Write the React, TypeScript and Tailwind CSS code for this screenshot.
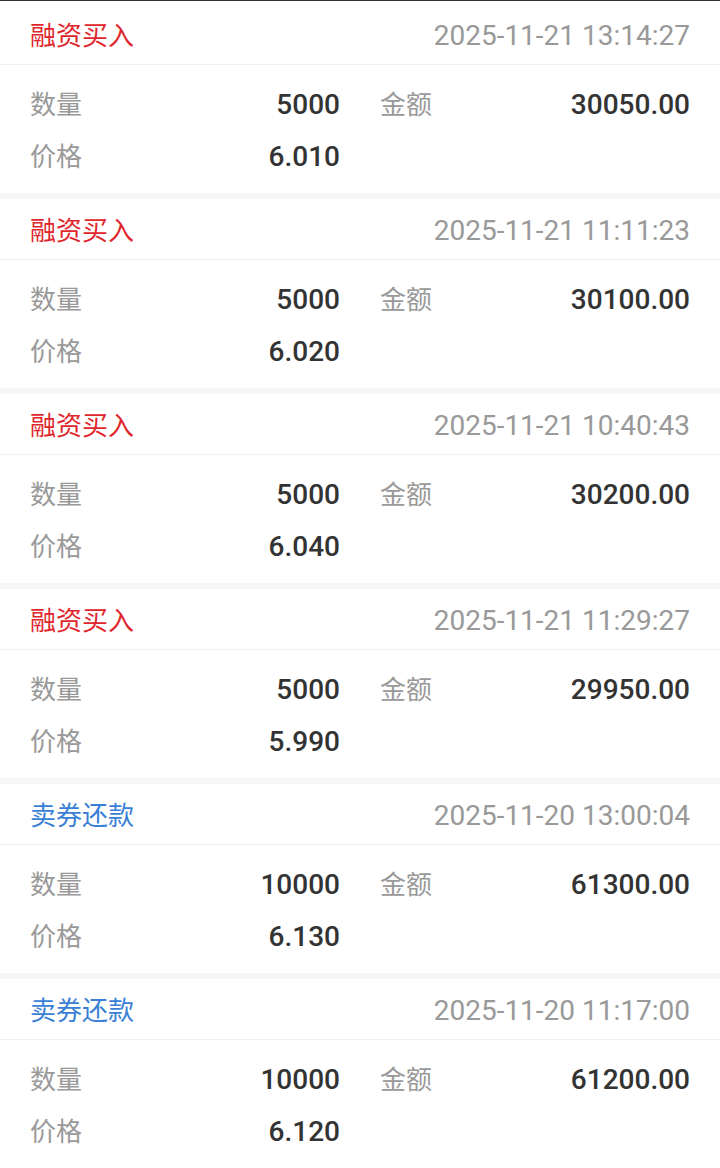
import React from "react";

type Rec = { type: string; time: string; qty: string; amount: string; price: string };

const data: Rec[] = [
  { type: "融资买入", time: "2025-11-21 13:14:27", qty: "5000", amount: "30050.00", price: "6.010" },
  { type: "融资买入", time: "2025-11-21 11:11:23", qty: "5000", amount: "30100.00", price: "6.020" },
  { type: "融资买入", time: "2025-11-21 10:40:43", qty: "5000", amount: "30200.00", price: "6.040" },
  { type: "融资买入", time: "2025-11-21 11:29:27", qty: "5000", amount: "29950.00", price: "5.990" },
  { type: "卖券还款", time: "2025-11-20 13:00:04", qty: "10000", amount: "61300.00", price: "6.130" },
  { type: "卖券还款", time: "2025-11-20 11:17:00", qty: "10000", amount: "61200.00", price: "6.120" },
];

const font = { fontFamily: 'Roboto, "Noto Sans CJK SC", sans-serif' };

function Cell({ label, value }: { label: string; value?: string }) {
  return (
    <div className="flex h-[52px] items-center justify-between">
      <span className="text-[26px] text-[#999999]">{label}</span>
      {value !== undefined && <span className="text-[28px] font-medium text-[#333333]">{value}</span>}
    </div>
  );
}

export default function App() {
  return (
    <div className="min-h-[1168px] w-[720px] border-t border-[#333333] bg-white" style={font}>
      {data.map((r, i) => (
        <div key={i} className={i === 0 ? "bg-white pt-[3px]" : "bg-white"}>
          <div className="flex h-[61px] items-center justify-between border-b border-[#f0f0f0] px-[30px] pt-[4px]">
            <span className={`text-[26px] ${r.type === "融资买入" ? "text-[#e0262c]" : "text-[#3a7fd6]"}`}>{r.type}</span>
            <span className="text-[28px] text-[#999999]">{r.time}</span>
          </div>
          <div className="grid grid-cols-2 gap-x-10 px-[30px] pb-[10px] pt-[14px]">
            <Cell label="数量" value={r.qty} />
            <Cell label="金额" value={r.amount} />
            <Cell label="价格" value={r.price} />
            <div />
          </div>
          {i < data.length - 1 && <div className="h-[6px] bg-[#f5f6f7]" />}
        </div>
      ))}
    </div>
  );
}
